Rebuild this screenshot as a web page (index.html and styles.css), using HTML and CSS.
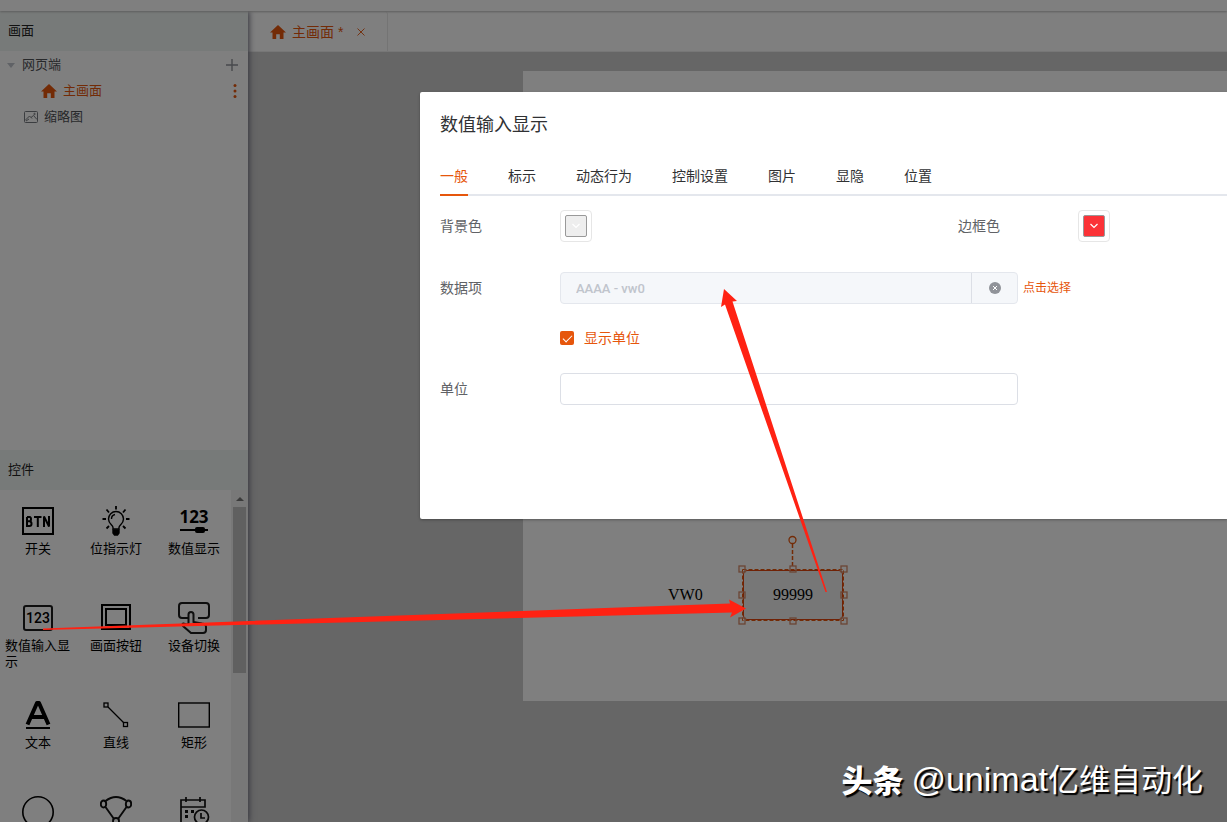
FILE: index.html
```html
<!DOCTYPE html>
<html lang="zh-CN">
<head>
<meta charset="utf-8">
<title>数值输入显示</title>
<link rel="stylesheet" href="styles.css">
</head>
<body>
<svg class="defs" aria-hidden="true">
  <symbol id="home" viewBox="0 0 16 16"><path fill="currentColor" d="M8 1 16 8.600H13.500V15H9.800V10.300H6.200V15H2.500V8.600H0Z"/></symbol>
  <symbol id="chevron" viewBox="0 0 12 12"><path fill="none" stroke="currentColor" stroke-width="1.200" d="M2.500 4 6 7.500 9.500 4"/></symbol>
</svg>
<div class="app">
  <header class="topbar"></header>
  <div class="main">
    <aside class="sidebar">
      <h2 class="section-title">画面</h2>
      <div class="tree">
        <div class="tree-row">
          <svg class="caret" viewBox="0 0 8 5"><path fill="#c0c4cc" d="M0 0H8L4 5Z"/></svg>
          <span class="tree-name">网页端</span>
          <button class="icon-btn" aria-label="添加"><svg width="12" height="12" viewBox="0 0 12 12"><path stroke="#909399" stroke-width="1.400" d="M6 0V12M0 6H12"/></svg></button>
        </div>
        <div class="tree-row child">
          <svg class="home"><use href="#home"/></svg>
          <span class="tree-name">主画面</span>
          <button class="icon-btn more" aria-label="更多"><svg width="4" height="14" viewBox="0 0 4 14"><g fill="#e6560c"><circle cx="2" cy="1.500" r="1.500"/><circle cx="2" cy="7" r="1.500"/><circle cx="2" cy="12.500" r="1.500"/></g></svg></button>
        </div>
        <div class="tree-row leaf">
          <svg width="14" height="12" viewBox="0 0 14 12" fill="none" stroke="#777b80"><rect x=".5" y=".5" width="13" height="11" rx="1"/><path d="M1 9.500 5.500 5 8 7.500M7 6.500 9.500 4.500 13 8.500M2 10 5 8"/><circle cx="10.500" cy="3" r=".7"/></svg>
          <span class="tree-name">缩略图</span>
        </div>
      </div>
      <h2 class="section-title">控件</h2>
      <div class="palette">
        <div class="widgets">
          <button class="widget"><svg viewBox="0 0 32 32"><rect x="1" y="3" width="30" height="26" fill="none" stroke="#000" stroke-width="2"/><path fill="none" stroke="#000" stroke-width="2" d="M5 12V21H7.500Q9.500 21 9.500 18.700T7.500 16.300H5M7.500 16.300Q9 16.300 9 14.100T7.500 12H5M12 12H19.500M15.800 12V22"/><path fill="none" stroke="#000" stroke-width="2" stroke-linejoin="bevel" d="M22 22V11.500L27 21.500V11"/></svg><span>开关</span></button>
          <button class="widget"><svg viewBox="0 0 32 32" fill="none" stroke="#000" stroke-width="1.400"><path d="M13 24V22.500C13 20 8.500 19 8.500 14A7.500 7.500 0 0 1 23.500 14C23.500 19 19 20 19 22.500V24ZM11.500 14A4.500 4.500 0 0 1 15 9.500"/><path stroke-width="1.800" d="M16 1V4.500M6.500 4.500 9 7.500M25.500 4.500 23 7.500M2.500 14H6M26 14H29.500M6.500 23.500 9 21M25.500 23.500 23 21"/><path fill="#000" d="M13 25H19V28L17.500 30H14.500L13 28Z"/></svg><span>位指示灯</span></button>
          <button class="widget"><svg viewBox="0 0 32 32"><text class="digits-bold" x="16" y="18" text-anchor="middle">123</text><path stroke="#000" stroke-width="2" d="M2 25H30"/><rect x="17" y="22" width="10" height="6" rx="2"/></svg><span>数值显示</span></button>
          <button class="widget"><svg viewBox="0 0 32 32"><rect x="2" y="4" width="28" height="24" rx="2" fill="none" stroke="#1c1c1c" stroke-width="2"/><text class="digits" x="16" y="21" text-anchor="middle">123</text></svg><span>数值输入显示</span></button>
          <button class="widget"><svg viewBox="0 0 32 32" fill="none" stroke="#000" stroke-width="2"><rect x="2" y="3" width="28" height="24"/><rect x="6" y="7" width="20" height="16"/></svg><span>画面按钮</span></button>
          <button class="widget"><svg viewBox="0 0 32 32" fill="none" stroke="#1c1c1c" stroke-width="2"><path d="M10 16H4Q1 16 1 13V4Q1 1 4 1H28Q31 1 31 4V13Q31 16 28 16H20"/><path d="M10.500 23V12.500Q10.500 10 13 10T15.500 12.500V20L24 21.500Q28 22 28 25V28Q28 31 25 31H13L5 24Q3.500 22 5.500 21.500L10.500 23"/></svg><span>设备切换</span></button>
          <button class="widget"><svg viewBox="0 0 32 32"><path fill="none" stroke="#000" stroke-width="4" stroke-linejoin="round" d="M5.500 25.500 15 4H17L26.500 25.500M9 18H23"/><path stroke="#000" stroke-width="2" d="M4 29H28"/></svg><span>文本</span></button>
          <button class="widget"><svg viewBox="0 0 32 32" fill="none" stroke="#000" stroke-width="1.300"><rect x="4" y="4" width="4" height="4"/><rect x="23.500" y="23.500" width="4" height="4"/><path d="M8 8 23.500 23.500"/></svg><span>直线</span></button>
          <button class="widget"><svg viewBox="0 0 32 32"><rect x=".7" y="4" width="30.600" height="24" fill="none" stroke="#000" stroke-width="1.400"/></svg><span>矩形</span></button>
          <button class="widget" aria-label="圆形"><svg viewBox="0 0 32 32"><circle cx="16" cy="16" r="15.200" fill="none" stroke="#000" stroke-width="1.600"/></svg></button>
          <button class="widget" aria-label="多边形"><svg viewBox="0 0 32 32" fill="none" stroke="#111" stroke-width="1.900"><ellipse cx="3.500" cy="8" rx="2.700" ry="3.500"/><ellipse cx="28.500" cy="8" rx="2.700" ry="3.500"/><path d="M5.500 5Q16-3 26.500 5M5.500 11 14 23M26.500 11 18 23"/><circle cx="16" cy="25" r="3"/></svg></button>
          <button class="widget" aria-label="历史报表"><svg viewBox="0 0 32 32" fill="none" stroke="#111" stroke-width="1.700"><path d="M14 27H3V4H27V11H3M8 1V6M22 1V6"/><circle cx="23.500" cy="21" r="7"/><path d="M23 17V22H27"/><path fill="#111" stroke="none" d="M7 14H10V17H7ZM13 14H16V17H13ZM7 19H10V22H7Z"/></svg></button>
        </div>
        <div class="scrollbar"><svg width="8" height="4" viewBox="0 0 8 4"><path fill="#777" d="M0 4 4 0 8 4Z"/></svg><div class="thumb"></div></div>
      </div>
    </aside>
    <main class="workspace">
      <div class="tabbar">
        <div class="file-tab"><svg class="home"><use href="#home"/></svg><span>主画面 *</span><button class="icon-btn" aria-label="关闭"><svg width="8" height="8" viewBox="0 0 8 8"><path stroke="#e6560c" stroke-width=".9" d="M.5.5 7.500 7.500M7.500.5.5 7.500"/></svg></button></div>
      </div>
      <div class="stage">
        <span class="stage-label">VW0</span>
        <div class="stage-value">99999</div>
        <svg class="selection" width="110" height="90" viewBox="0 0 110 90" fill="none" stroke="#e6560c">
          <path stroke-dasharray="4 2" d="M4.500 34.500H105.500V85.500H4.500Z"/>
          <path stroke-width="1.500" stroke-dasharray="4 2" d="M54.500 9V31"/>
          <circle cx="54.500" cy="5" r="3.500" stroke-width="1.300"/>
          <g stroke="#d78a68" stroke-width="1.300"><rect x="1" y="31" width="6" height="6"/><rect x="52" y="31" width="6" height="6"/><rect x="103" y="31" width="6" height="6"/><rect x="1" y="57" width="6" height="6"/><rect x="103" y="57" width="6" height="6"/><rect x="1" y="83" width="6" height="6"/><rect x="52" y="83" width="6" height="6"/><rect x="103" y="83" width="6" height="6"/></g>
        </svg>
      </div>
    </main>
  </div>
</div>
<div class="overlay">
  <section class="dialog" role="dialog" aria-labelledby="dialog-title">
    <h1 class="dialog-title" id="dialog-title">数值输入显示</h1>
    <nav class="tabs">
      <button class="tab active">一般</button><button class="tab">标示</button><button class="tab">动态行为</button><button class="tab">控制设置</button><button class="tab">图片</button><button class="tab">显隐</button><button class="tab">位置</button>
    </nav>
    <form class="form">
      <div class="pair">
        <div class="field"><label for="bg">背景色</label><button type="button" id="bg" class="picker"><span class="swatch gray"><svg width="12" height="12"><use href="#chevron"/></svg></span></button></div>
        <div class="field"><label for="bd">边框色</label><button type="button" id="bd" class="picker"><span class="swatch red"><svg width="12" height="12"><use href="#chevron"/></svg></span></button></div>
      </div>
      <div class="field">
        <label for="item">数据项</label>
        <div class="group"><input id="item" type="text" value="AAAA - vw0" disabled><button type="button" aria-label="清除"><svg width="12" height="12" viewBox="0 0 12 12"><circle cx="6" cy="6" r="6" fill="#909399"/><path stroke="#fff" d="M4 4 8 8M8 4 4 8"/></svg></button></div>
        <a class="pick" href="#">点击选择</a>
      </div>
      <div class="check-row"><input type="checkbox" id="show" checked><label for="show">显示单位</label></div>
      <div class="field"><label for="unit">单位</label><input id="unit" class="unit" type="text"></div>
    </form>
  </section>
</div>
<svg class="arrows" width="840" height="640" viewBox="0 0 840 640" fill="#ff2213">
  <path d="M43 628.500 730 603.500 729 599.500 746 608.500 730 617.500 732 612.500 43 630Z"/>
  <path d="M724 289 737 301 732.500 301.500 827 592 825.500 592 725 304.500 721 307Z"/>
</svg>
<div class="watermark"><strong>头条</strong><span><span class="handle">@unimat</span>亿维自动化</span></div>
</body>
</html>
```

FILE: styles.css
```css
* { box-sizing: border-box; }
body {
  margin: 0;
  height: 100vh;
  overflow: hidden;
  position: relative;
  font: 13px/16px "Liberation Sans", "Noto Sans CJK SC", sans-serif;
  color: #303133;
  background: #fff;
}
button { font: inherit; color: inherit; border: 0; padding: 0; background: none; cursor: pointer; }
svg { display: block; flex: none; }
.defs { position: absolute; width: 0; height: 0; }

.app { display: flex; flex-direction: column; height: 100vh; }
.topbar { height: 11px; flex: none; background: #fff; box-shadow: 0 1px 2px #bbb; z-index: 3; }
.main { display: flex; flex: 1; min-height: 0; }

.sidebar { width: 248px; flex: none; display: flex; flex-direction: column; background: #fff; box-shadow: 1px 0 6px #667; z-index: 2; }
.section-title { margin: 0; padding: 0 8px; flex: none; font-size: 13px; font-weight: 400; line-height: 40px; background: #eff5f3; color: #222; }
.tree { flex: 1; padding-top: 1px; min-height: 0; color: #505256; }
.tree-row { display: flex; align-items: center; height: 26px; padding: 0 10px 0 7px; }
.tree-row.child { padding-left: 41px; gap: 6px; color: #e6560c; }
.tree-row.leaf { padding-left: 24px; gap: 6px; }
.tree-name { flex: 1; }
.caret { width: 8px; height: 5px; margin-right: 7px; }
.more { margin-right: 1px; }
.home { width: 16px; height: 16px; color: #e6560c; }

.palette { display: flex; height: 332px; flex: none; overflow: hidden; }
.widgets { flex: 1; display: grid; grid-template-columns: 76px 80px 76px; grid-auto-rows: 97px; color: #000; min-width: 0; }
.widget { display: flex; flex-direction: column; align-items: center; gap: 4px; padding-top: 15px; text-align: left; }
.widget svg { width: 32px; height: 32px; }
.widget span { max-width: 66px; }
.digits-bold { font: bold 17px "Open Sans", sans-serif; }
.digits { font: 500 14px Roboto, sans-serif; }
.scrollbar { flex: none; width: 17px; background: #f1f1f1; display: flex; flex-direction: column; align-items: center; gap: 6px; padding-top: 7px; }
.thumb { width: 13px; height: 166px; background: #c1c1c1; }

.workspace { flex: 1; min-width: 0; background: #ccc; }
.tabbar { display: flex; height: 41px; background: #fff; border-bottom: 1px solid #eee; }
.file-tab { display: flex; align-items: center; width: 140px; padding: 2px 0 0 22px; gap: 6px; border-right: 1px solid #e8e8e8; border-top-right-radius: 4px; font-size: 14px; color: #e6560c; }
.file-tab .icon-btn { margin-left: 8px; }
.stage { position: relative; height: 630px; margin: 19px 0 0 275px; background: #fff; font: 16px/20px "Liberation Serif", serif; color: #000; }
.stage-label { position: absolute; left: 145px; top: 514px; }
.stage-value { position: absolute; left: 220px; top: 499px; width: 100px; line-height: 48px; text-align: center; background: #eee; border: 1px solid #e0440c; border-radius: 4px; }
.selection { position: absolute; left: 215px; top: 464px; }

.overlay { position: absolute; inset: 0; padding: 92px 0 0 420px; background: rgba(0, 0, 0, .5); z-index: 10; }
.dialog { background: #fff; border-radius: 2px 0 0 2px; padding: 20px 0 114px 20px; box-shadow: 0 1px 3px rgba(0, 0, 0, .3); font-size: 14px; }
.dialog-title { margin: 0 0 18px; font-size: 18px; font-weight: 400; line-height: 26px; }
.tabs { display: flex; gap: 40px; border-bottom: 2px solid #e4e7ed; }
.tab { line-height: 38px; height: 40px; margin-bottom: -2px; padding-top: 1px; border-bottom: 2px solid transparent; }
.tab.active { color: #e6560c; border-color: #e6560c; }
.form { padding-top: 14px; color: #606266; }
.pair { display: grid; grid-template-columns: 518px 1fr; margin-bottom: 12px; }
.field { display: flex; align-items: center; height: 32px; margin-bottom: 18px; }
.field:last-child { margin-bottom: 0; }
.pair .field { margin-bottom: 18px; }
.field label { width: 120px; flex: none; }
.picker { width: 32px; height: 32px; padding: 4px; border: 1px solid #e6e6e6; border-radius: 4px; }
.swatch { display: flex; align-items: center; justify-content: center; height: 22px; border: 1px solid #999; border-radius: 2px; color: #fff; }
.gray { background: #eee; }
.red { background: #fb3237; }
.group { display: flex; width: 458px; height: 32px; border: 1px solid #e4e7ed; border-radius: 4px; background: #f5f7fa; }
.group input { flex: 1; min-width: 0; padding: 0 15px; border: 0; background: none; color: #c0c4cc; font: 500 13px Roboto, sans-serif; }
.group button { width: 46px; border-left: 1px solid #dcdfe6; display: flex; align-items: center; justify-content: center; }
.pick { margin-left: 5px; font-size: 12px; color: #e6560c; text-decoration: none; }
.check-row { display: flex; align-items: center; gap: 10px; height: 32px; margin: 0 0 19px 120px; color: #e6560c; }
.check-row input { appearance: none; position: relative; width: 14px; height: 14px; margin: 0; background: #e6560c; border-radius: 2px; }
.check-row input::after { content: ""; position: absolute; left: 5px; top: 2px; width: 4px; height: 8px; border: solid #fff; border-width: 0 1px 1px 0; transform: rotate(45deg); }
.unit { width: 458px; height: 32px; padding: 0 15px; border: 1px solid #dcdfe6; border-radius: 4px; font: inherit; background: #fff; }

.arrows { position: absolute; left: 0; top: 0; z-index: 11; pointer-events: none; }
.watermark { position: absolute; right: 24px; bottom: 23px; z-index: 12; display: flex; align-items: center; gap: 8px; font: 400 31px/40px "Noto Sans CJK SC", sans-serif; color: #fff; text-shadow: 2px 2px 1px #000; }
.watermark strong { font-weight: 900; }
.handle { font-family: "Liberation Sans", sans-serif; font-size: 34px; }
```
